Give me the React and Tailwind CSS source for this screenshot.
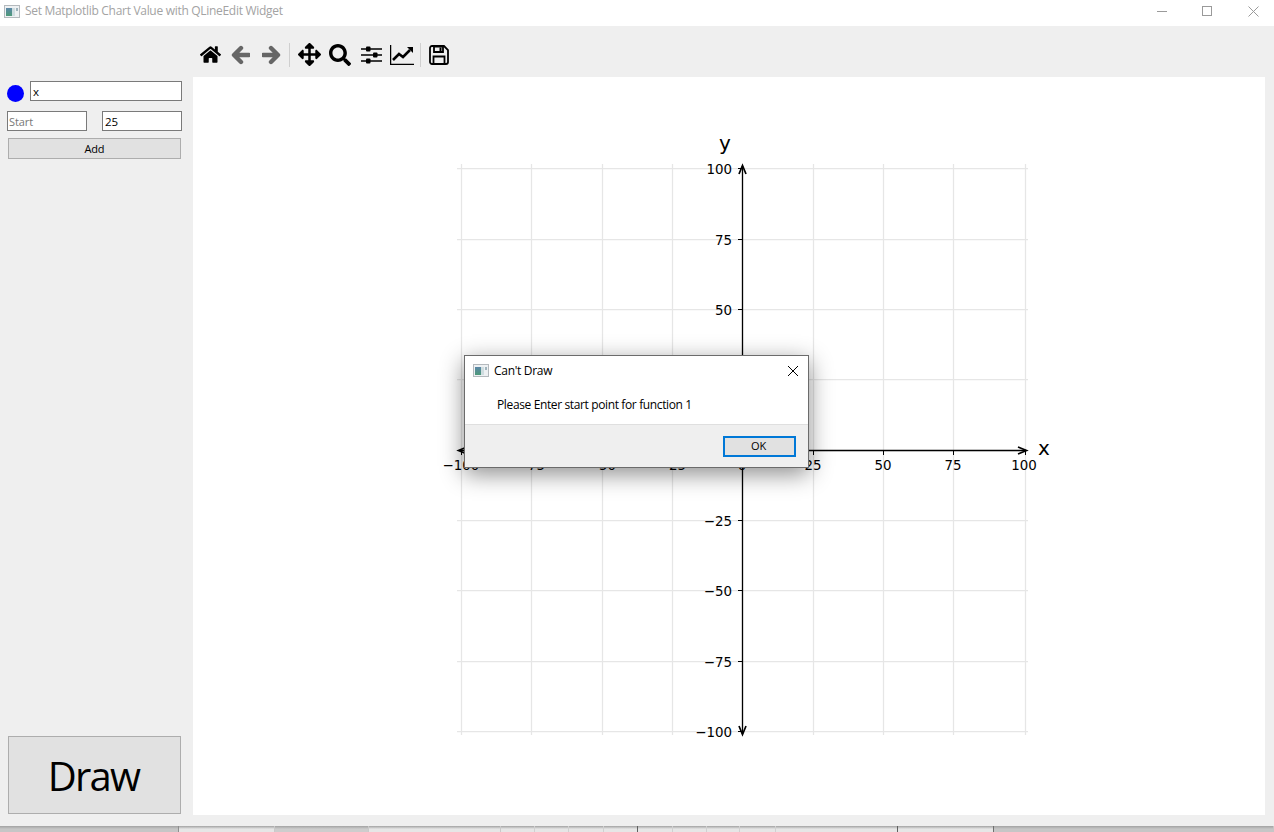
import React from "react";
import { FaHome, FaArrowsAlt, FaSearch } from "react-icons/fa";

const ui = { fontFamily: '"Open Sans", "Noto Sans", sans-serif' };

function AppIcon({ id }) {
  return (
    <svg width="16" height="13" viewBox="0 0 16 13" className="shrink-0">
      <defs>
        <linearGradient id={id} x1="0" y1="0" x2="0" y2="1">
          <stop offset="0" stopColor="#5b86a8" />
          <stop offset="1" stopColor="#4d9a78" />
        </linearGradient>
      </defs>
      <rect x="0.5" y="0.5" width="15" height="12" fill="#eef1f3" stroke="#b4b9bd" />
      <rect x="2" y="3" width="6" height="8" fill={`url(#${id})`} />
      <rect x="8" y="3" width="3" height="8" fill="#cfdde0" />
      <rect x="12" y="3" width="2" height="3" fill="#9fb4bd" />
    </svg>
  );
}

function Arrow({ flip }) {
  return (
    <svg width="19" height="20" viewBox="0 0 19 20" className={flip ? "-scale-x-100" : ""}>
      <path d="M10 3L3 10l7 7M4 10h14" fill="none" stroke="#666" strokeWidth="4.4" strokeLinecap="round" strokeLinejoin="round" />
    </svg>
  );
}

function Sliders() {
  return (
    <svg width="21" height="20" viewBox="0 0 21 20">
      <path d="M0 4h21M0 10h21M0 16h21" stroke="#000" strokeWidth="1.5" />
      <rect x="5" y="1.5" width="4.5" height="5" rx="1" fill="#000" />
      <rect x="12" y="7.5" width="4.5" height="5" rx="1" fill="#000" />
      <rect x="5" y="13.5" width="4.5" height="5" rx="1" fill="#000" />
    </svg>
  );
}

function LineChart() {
  return (
    <svg width="24" height="20" viewBox="0 0 24 20">
      <path d="M0.6 0v19.3H24" fill="none" stroke="#000" strokeWidth="1.3" />
      <path d="M3 15l6-6 4 3 7-7" fill="none" stroke="#000" strokeWidth="2.6" />
      <path d="M17 2h6v6z" fill="#000" />
    </svg>
  );
}

function Floppy() {
  return (
    <svg width="20" height="20" viewBox="0 0 20 20">
      <path d="M1 3a2 2 0 012-2h12l4 4v12a2 2 0 01-2 2H3a2 2 0 01-2-2z" fill="none" stroke="#000" strokeWidth="1.8" />
      <path d="M5 1.5h9v5.5H5z" fill="none" stroke="#000" strokeWidth="1.8" />
      <rect x="10.5" y="2.5" width="2" height="3.5" fill="#000" />
      <path d="M4.5 18.5V11.5h11v7" fill="none" stroke="#000" strokeWidth="1.8" />
    </svg>
  );
}

function Sep() {
  return <div className="w-px h-6 bg-[#cfcfcf]" />;
}

function Chart() {
  const xs = [461, 531, 602, 672, 742, 813, 883, 953, 1025];
  const ys = [168, 239, 309, 379, 450, 520, 590, 661, 731];
  const yLabels = ["100", "75", "50", "25", "", "\u221225", "\u221250", "\u221275", "\u2212100"];
  const xLabels = ["\u2212100", "\u221275", "\u221250", "\u221225", "0", "25", "50", "75", "100"];
  const mono = { fontFamily: '"DejaVu Sans", sans-serif' };
  return (
    <svg className="w-full h-full block" viewBox="193 77 1072 738" style={mono}>
      {xs.map((x) => (
        <line key={x} x1={x + 0.5} x2={x + 0.5} y1="164" y2="735" stroke="#e6e6e6" strokeWidth="1.25" />
      ))}
      {ys.map((y) => (
        <line key={y} x1="457" x2="1028" y1={y + 0.5} y2={y + 0.5} stroke="#e6e6e6" strokeWidth="1.25" />
      ))}
      <line x1="742.5" x2="742.5" y1="166" y2="734" stroke="#000" strokeWidth="1.3" />
      <line x1="460" x2="1026" y1="450.5" y2="450.5" stroke="#000" strokeWidth="1.3" />
      <path d="M739 174 L742.5 165.5 L746 174" fill="none" stroke="#000" strokeWidth="1.7" />
      <path d="M739 726 L742.5 734.5 L746 726" fill="none" stroke="#000" strokeWidth="1.7" />
      <path d="M1018 447 L1026.5 450.5 L1018 454" fill="none" stroke="#000" strokeWidth="1.7" />
      <path d="M467 447 L458.5 450.5 L467 454" fill="none" stroke="#000" strokeWidth="1.7" />
      {ys.map((y, i) => yLabels[i] && (
        <g key={y}>
          <line x1="738" x2="742" y1={y + 0.5} y2={y + 0.5} stroke="#000" />
          <text x="732" y={y + 6} textAnchor="end" fontSize="13.4" fill="#000">{yLabels[i]}</text>
        </g>
      ))}
      {xs.map((x, i) => (
        <g key={x}>
          <line x1={x + 0.5} x2={x + 0.5} y1="451" y2="455" stroke="#000" />
          <text x={i === 0 ? 461 : i === 8 ? 1024 : x} y="470" textAnchor="middle" fontSize="13.4" fill="#000">{xLabels[i]}</text>
        </g>
      ))}
      <text x="725" y="150" textAnchor="middle" fontSize="20" fill="#000">y</text>
      <text x="1044" y="455" textAnchor="middle" fontSize="20" fill="#000">x</text>
    </svg>
  );
}

function Dialog() {
  return (
    <div className="absolute left-[464px] top-[355px] w-[345px] h-[113px] flex flex-col bg-white border border-[#6b6b6b] shadow-[0_6px_22px_rgba(0,0,0,0.45)]">
      <div className="h-[29px] flex items-center pl-2 pr-[7px] gap-[5px]">
        <AppIcon id="dlgIcon" />
        <span className="text-[12px] tracking-[-0.3px] text-black">Can't Draw</span>
        <svg width="12" height="12" viewBox="0 0 12 12" className="ml-auto mr-[2px]">
          <path d="M1 1l10 10M11 1L1 11" stroke="#000" strokeWidth="1" />
        </svg>
      </div>
      <div className="h-[39px] pl-8 pt-[11px] text-[12px] tracking-[-0.37px] text-black">Please Enter start point for function 1</div>
      <div className="flex-1 bg-[#efefef] border-t border-[#dfdfdf] flex items-center justify-end pr-3">
        <div className="w-[73px] h-[21px] bg-[#e1e1e1] border-2 border-[#0078d7] flex items-center justify-center text-[11px] tracking-[-0.2px] text-black pr-[2px]">OK</div>
      </div>
    </div>
  );
}

const strip = [
  [179, "#c6c6c6", "#8f8f8f"],
  [96, "#e6e6e6", "#c9c9c9"],
  [94, "#cdcdcd", "#c9c9c9"],
  [132, "#e6e6e6", "#c9c9c9"],
  [34, "#e6e6e6", "#d0d0d0"],
  [34, "#e6e6e6", "#d0d0d0"],
  [35, "#e6e6e6", "#d0d0d0"],
  [34, "#e6e6e6", "#5f5f5f"],
  [35, "#e6e6e6", "#d0d0d0"],
  [34, "#e6e6e6", "#d0d0d0"],
  [33, "#e6e6e6", "#d0d0d0"],
  [36, "#e6e6e6", "#d0d0d0"],
  [122, "#e6e6e6", "#5f5f5f"],
  [96, "#e6e6e6", "#6f6f6f"],
  [280, "#c6c6c6", "#c6c6c6"],
];

export default function App() {
  return (
    <div className="relative w-[1274px] h-[832px] overflow-hidden flex flex-col bg-[#efefef]" style={ui}>
      <header className="h-[26px] bg-white flex items-center pl-1 pb-[4px] gap-[5px]">
        <AppIcon id="winIcon" />
        <span className="text-[12px] tracking-[-0.3px] text-[#a3a3a3]">Set Matplotlib Chart Value with QLineEdit Widget</span>
        <div className="ml-auto flex items-center gap-[35px] pr-[15px]">
          <div className="w-[10px] h-px bg-[#9a9a9a]" />
          <div className="w-[10px] h-[10px] border border-[#9a9a9a] mr-px" />
          <svg width="11" height="11" viewBox="0 0 11 11"><path d="M.5.5l10 10M10.5.5l-10 10" stroke="#9a9a9a" /></svg>
        </div>
      </header>
      <main className="h-[800px] flex">
        <aside className="w-[193px] flex flex-col pl-2 pr-3 pt-[55px] pb-[12px]">
          <div className="flex items-start gap-[6px] -ml-px h-5">
            <div className="w-[17px] h-[17px] mt-1 rounded-full bg-[#0000ff] shrink-0" />
            <input readOnly value="x" className="w-[152px] shrink-0 h-5 border border-[#7a7a7a] bg-white text-[11.5px] px-[2px] text-black outline-none" />
          </div>
          <div className="flex justify-between mt-[10px] -ml-px -mr-px">
            <input readOnly placeholder="Start" className="w-[80px] h-5 border border-[#7a7a7a] bg-white text-[11px] px-px tracking-[-0.1px] text-black placeholder:text-[#787878] outline-none" />
            <input readOnly value="25" className="w-[80px] h-5 border border-[#7a7a7a] bg-white text-[11.5px] px-[2px] text-black outline-none" />
          </div>
          <button className="mt-[7px] h-[21px] pt-px bg-[#e1e1e1] border border-[#adadad] text-[11px] tracking-[-0.2px] text-black">Add</button>
          <button className="mt-auto h-[78px] pt-[2px] pr-[2px] bg-[#e1e1e1] border border-[#adadad] text-[40px] tracking-[-1.8px] text-black">Draw</button>
        </aside>
        <div className="w-[1072px] flex flex-col">
          <div className="h-[51px] flex items-center pl-[6px] pt-[6px]">
            <div className="w-[22px] flex justify-center"><FaHome size={21} color="#000" /></div>
            <div className="w-[30px] ml-[4px] flex justify-center"><Arrow /></div>
            <div className="w-[30px] ml-px -mr-px flex justify-center"><Arrow flip /></div>
            <div className="ml-[4px] mr-[3px]"><Sep /></div>
            <div className="w-[32px] flex justify-center"><FaArrowsAlt size={23} color="#000" /></div>
            <div className="w-[30px] flex justify-center"><FaSearch size={22} color="#000" /></div>
            <div className="w-[32px] flex justify-center"><Sliders /></div>
            <div className="w-[30px] flex justify-center"><LineChart /></div>
            <div className="mx-[3px]"><Sep /></div>
            <div className="w-[30px] flex justify-center"><Floppy /></div>
          </div>
          <div className="h-[738px] bg-white"><Chart /></div>
        </div>
      </main>
      <footer className="flex-1 flex">
        {strip.map(([w, c, b], i) => (
          <div
            key={i}
            style={{ width: w, background: `linear-gradient(#a2a2a2 0, ${c} 3px)`, borderRightColor: b }}
            className="h-full border-r shrink-0"
          />
        ))}
      </footer>
      <Dialog />
    </div>
  );
}
